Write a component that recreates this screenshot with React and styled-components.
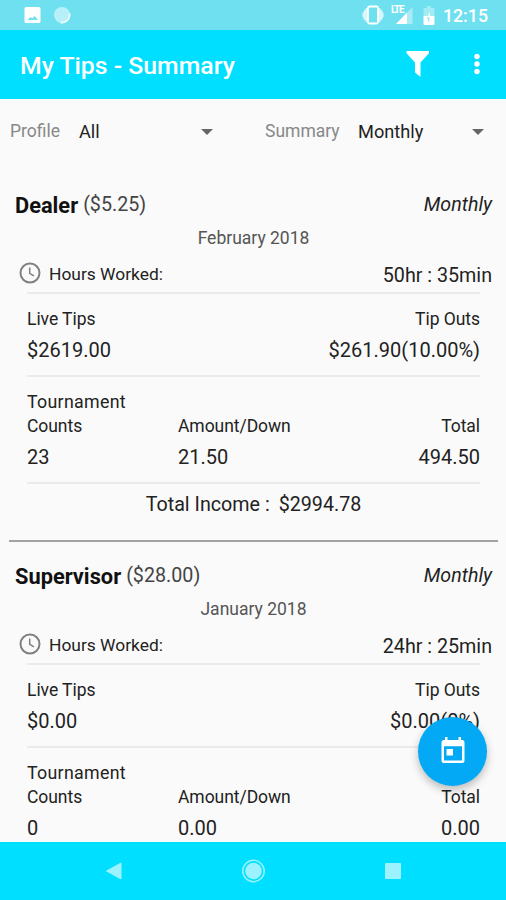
import React from "react";
import styled, { createGlobalStyle } from "styled-components";

const jobs = [
  {
    name: "Dealer",
    rate: "($5.25)",
    month: "February 2018",
    hours: "50hr : 35min",
    liveTips: "$2619.00",
    tipOuts: "$261.90(10.00%)",
    counts: "23",
    amount: "21.50",
    total: "494.50",
    income: "$2994.78",
  },
  {
    name: "Supervisor",
    rate: "($28.00)",
    month: "January 2018",
    hours: "24hr : 25min",
    liveTips: "$0.00",
    tipOuts: "$0.00(0%)",
    counts: "0",
    amount: "0.00",
    total: "0.00",
  },
];

const StatusBar = () => (
  <StatusContainer>
    <svg width="18" height="18" viewBox="0 0 18 18">
      <path
        fill="#fff"
        fillRule="evenodd"
        d="M2 1h13a1.5 1.5 0 0 1 1.5 1.5v13A1.5 1.5 0 0 1 15 17H2A1.5 1.5 0 0 1 .5 15.5v-13A1.5 1.5 0 0 1 2 1zm1.500 13h10.500l-3.300-4-2.500 2.500-1.700-1.400z"
      />
    </svg>
    <SyncIcon width="18" height="18" viewBox="0 0 18 18">
      <circle cx="9" cy="9" r="8" fill="#fff" fillOpacity=".5" />
      <path
        d="M16.500 7.500a7.600 7.600 0 0 1-9 8.900"
        fill="none"
        stroke="#fff"
        strokeOpacity=".85"
        strokeWidth="1.600"
      />
    </SyncIcon>
    <StatusRight>
      <svg width="22" height="20" viewBox="0 0 22 20">
        <path
          d="M5 3v14M17 3v14"
          stroke="#fff"
          strokeOpacity=".7"
          strokeWidth="3"
        />
        <path d="M2.800 5v10M19.200 5v10" stroke="#fff" strokeOpacity=".75" strokeWidth="2" />
        <path d="M1.200 7.500v5M20.800 7.500v5" stroke="#fff" strokeOpacity=".7" strokeWidth="1.500" />
        <rect x="6" y="1.500" width="10" height="17" rx="1.500" fill="#6fe0f0" stroke="#fff" strokeWidth="1.800" />
      </svg>
      <Signal>
        <Lte>LTE</Lte>
        <svg width="18" height="17" viewBox="0 0 18 17">
          <path d="M17.500 0v17H1z" fill="#fff" fillOpacity=".4" />
          <path d="M12 5.700V17H1z" fill="#fff" />
        </svg>
      </Signal>
      <svg width="12" height="19" viewBox="0 0 12 19">
        <path d="M4 0h4v2h3.500v8H.5V2H4z" fill="#fff" fillOpacity=".35" />
        <path d="M.5 10H5l2-4v4h4.500v8a1 1 0 0 1-1 1h-9a1 1 0 0 1-1-1z" fill="#fff" />
        <path d="M5.800 15.500v-3.500h-2" fill="none" stroke="#6fe0f0" />
      </svg>
      <Clock>12:15</Clock>
    </StatusRight>
  </StatusContainer>
);

const JobSummary = ({ job }) => (
  <Card>
    <CardHeader>
      <JobName>{job.name}</JobName>
      <Rate>{job.rate}</Rate>
      <Period>Monthly</Period>
    </CardHeader>
    <Month>{job.month}</Month>
    <HoursRow>
      <svg width="22" height="22" viewBox="0 0 22 22" fill="none" stroke="#808080">
        <circle cx="11" cy="11" r="9.500" strokeWidth="2" />
        <path d="M10.700 5.500v5.800l4.300 2.600" strokeWidth="1.500" />
      </svg>
      <HoursLabel>Hours Worked:</HoursLabel>
      <Hours>{job.hours}</Hours>
    </HoursRow>
    <Section>
      <TwoColumns>
        <Label>Live Tips</Label>
        <Label $right>Tip Outs</Label>
        <Value>{job.liveTips}</Value>
        <Value $right>{job.tipOuts}</Value>
      </TwoColumns>
    </Section>
    <Section>
      <SectionTitle>Tournament</SectionTitle>
      <ThreeColumns>
        <Label>Counts</Label>
        <Label>Amount/Down</Label>
        <Label $right>Total</Label>
        <Value>{job.counts}</Value>
        <Value>{job.amount}</Value>
        <Value $right>{job.total}</Value>
      </ThreeColumns>
    </Section>
    {job.income && (
      <Income>
        <span>Total Income :</span>
        <span>{job.income}</span>
      </Income>
    )}
  </Card>
);

const App = () => {
  return (
    <Screen>
      <GlobalStyle />
      <StatusBar />
      <AppBar>
        <Title>My Tips - Summary</Title>
        <svg width="24" height="26" viewBox="0 0 24 26">
          <path d="M.5 0h22.500v2.200l-8.500 9.300V26L9 21.500V11.500L.5 2.200z" fill="#fff" />
        </svg>
        <MoreIcon width="8" height="22" viewBox="0 0 8 22" fill="#fff">
          <circle cx="4" cy="3.500" r="2.700" />
          <circle cx="4" cy="11" r="2.700" />
          <circle cx="4" cy="18.500" r="2.700" />
        </MoreIcon>
      </AppBar>
      <Filters>
        <FilterLabel $width={69}>Profile</FilterLabel>
        <Select $width={134}>
          All
          <Arrow />
        </Select>
        <FilterLabel $width={93}>Summary</FilterLabel>
        <Select $width={126}>
          Monthly
          <Arrow />
        </Select>
      </Filters>
      <List>
        {jobs.map((job) => (
          <JobSummary key={job.name} job={job} />
        ))}
      </List>
      <CalendarButton aria-label="Calendar">
        <svg width="24" height="27" viewBox="0 0 24 27">
          <path
            fill="#fff"
            fillRule="evenodd"
            d="M4 0h2.500v3h11V0H20v3h1a2.500 2.500 0 0 1 2.500 2.500V23.500A2.500 2.500 0 0 1 21 26H3A2.500 2.500 0 0 1 .5 23.500V5.500A2.500 2.500 0 0 1 3 3h1zM3 9.200V23.500h18V9.200z"
          />
          <path d="M5.500 12h6.500v6.500H5.500z" fill="#fff" />
        </svg>
      </CalendarButton>
      <NavBar>
        <svg width="18" height="20" viewBox="0 0 18 20">
          <path d="M16 2v16L1.500 10z" fill="#9cf3ff" stroke="#9cf3ff" strokeLinejoin="round" />
        </svg>
        <svg width="26" height="26" viewBox="0 0 26 26">
          <circle cx="12.500" cy="13" r="10.700" fill="none" stroke="#9cf3ff" strokeWidth="1.500" />
          <circle cx="12.500" cy="13" r="8.300" fill="#9cf3ff" />
        </svg>
        <svg width="18" height="18" viewBox="0 0 18 18">
          <rect x="1" y="1" width="16" height="16" rx=".7" fill="#9cf3ff" />
        </svg>
      </NavBar>
    </Screen>
  );
};

const GlobalStyle = createGlobalStyle`
  * {
    box-sizing: border-box;
  }
  body {
    margin: 0;
    font-family: Roboto, sans-serif;
  }
  svg {
    display: block;
    flex-shrink: 0;
  }
`;

const Screen = styled.div`
  position: relative;
  width: 506px;
  height: 900px;
  display: flex;
  flex-direction: column;
  overflow: hidden;
  background-color: #fafafa;
  color: #222;
`;

const StatusContainer = styled.div`
  height: 30px;
  flex-shrink: 0;
  display: flex;
  align-items: center;
  padding: 0 18px 0 24px;
  background-color: #6fe0f0;
`;

const SyncIcon = styled.svg`
  margin-left: 11px;
`;

const StatusRight = styled.div`
  margin-left: auto;
  display: flex;
  align-items: center;
`;

const Signal = styled.div`
  position: relative;
  margin: 1px 10px 0 11px;
`;

const Lte = styled.span`
  position: absolute;
  left: -4px;
  top: -2px;
  color: #fff;
  font-size: 10px;
  line-height: 10px;
  font-weight: bold;
  letter-spacing: -1.2px;
`;

const Clock = styled.span`
  width: 46px;
  margin: 1px 0 0 7px;
  color: #fff;
  font-size: 17.8px;
  font-weight: 500;
  text-align: right;
`;

const AppBar = styled.div`
  height: 69px;
  flex-shrink: 0;
  display: flex;
  align-items: center;
  padding: 0 25px 2px 20px;
  background-color: #00dfff;
`;

const Title = styled.h1`
  flex: 1;
  margin: 4px 0 0;
  color: #fff;
  font-size: 24.8px;
  font-weight: 500;
`;

const MoreIcon = styled.svg`
  margin-left: 43px;
`;

const Filters = styled.div`
  height: 72px;
  flex-shrink: 0;
  display: flex;
  align-items: flex-start;
  padding: 20px 10px 0;
  line-height: 25px;
`;

const FilterLabel = styled.span`
  width: ${(props) => props.$width}px;
  color: #888;
  font-size: 17.5px;
`;

const Select = styled.div`
  width: ${(props) => props.$width}px;
  display: flex;
  align-items: center;
  justify-content: space-between;
  font-size: 18.2px;
  & + span {
    margin-left: 52px;
  }
`;

const Arrow = styled.i`
  border: 6px solid transparent;
  border-top-color: #666;
  border-bottom: 0;
`;

const List = styled.div`
  flex: 1;
  min-height: 0;
  overflow: hidden;
`;

const Card = styled.div`
  height: 371px;
  margin: 0 8px 0 9px;
  padding-top: 17px;
  border-bottom: 2px solid #a2a2a2;
`;

const CardHeader = styled.div`
  height: 34px;
  display: flex;
  align-items: center;
  padding: 0 6px;
`;

const JobName = styled.span`
  font-size: 21.8px;
  font-weight: bold;
  color: #111;
`;

const Rate = styled.span`
  margin: -1px 0 0 5px;
  font-size: 19.7px;
  color: #444;
`;

const Period = styled.span`
  margin: -1px 0 0 auto;
  font-size: 19.6px;
  font-style: italic;
`;

const Month = styled.div`
  height: 32px;
  line-height: 32px;
  text-align: center;
  font-size: 17.5px;
  color: #555;
`;

const HoursRow = styled.div`
  height: 38px;
  display: flex;
  align-items: center;
  padding: 0 6px 0 10px;
`;

const HoursLabel = styled.span`
  margin: 2px 0 0 8px;
  font-size: 17.4px;
`;

const Hours = styled.span`
  margin: 5px 0 0 auto;
  font-size: 19.7px;
`;

const Section = styled.div`
  margin: 0 18px;
  padding: 13px 0 5px;
  border-top: 2px solid #ebebeb;
`;

const TwoColumns = styled.div`
  display: grid;
  grid-template-columns: 1fr 1fr;
`;

const ThreeColumns = styled.div`
  display: grid;
  grid-template-columns: repeat(3, 1fr);
`;

const Label = styled.div`
  line-height: 24px;
  font-size: 17.5px;
  letter-spacing: -0.05px;
  text-align: ${(props) => (props.$right ? "right" : "left")};
`;

const SectionTitle = styled(Label)`
  font-size: 17.8px;
  letter-spacing: 0.3px;
`;

const Value = styled.div`
  line-height: 39px;
  font-size: 20px;
  text-align: ${(props) => (props.$right ? "right" : "left")};
`;

const Income = styled.div`
  margin: 0 18px;
  height: 41px;
  display: flex;
  align-items: center;
  justify-content: center;
  gap: 9px;
  padding-top: 1px;
  border-top: 2px solid #ebebeb;
  font-size: 19.7px;
`;

const CalendarButton = styled.button`
  position: absolute;
  right: 19px;
  bottom: 114px;
  width: 69px;
  height: 69px;
  display: flex;
  align-items: center;
  justify-content: center;
  padding: 0 0 2px;
  border: 0;
  border-radius: 50%;
  background-color: #03a9f4;
  box-shadow: 0 4px 8px rgba(0, 0, 0, 0.25);
`;

const NavBar = styled.div`
  height: 58px;
  flex-shrink: 0;
  display: flex;
  align-items: center;
  justify-content: space-between;
  padding: 0 104px 0 105px;
  background-color: #00dfff;
`;

export default App;
